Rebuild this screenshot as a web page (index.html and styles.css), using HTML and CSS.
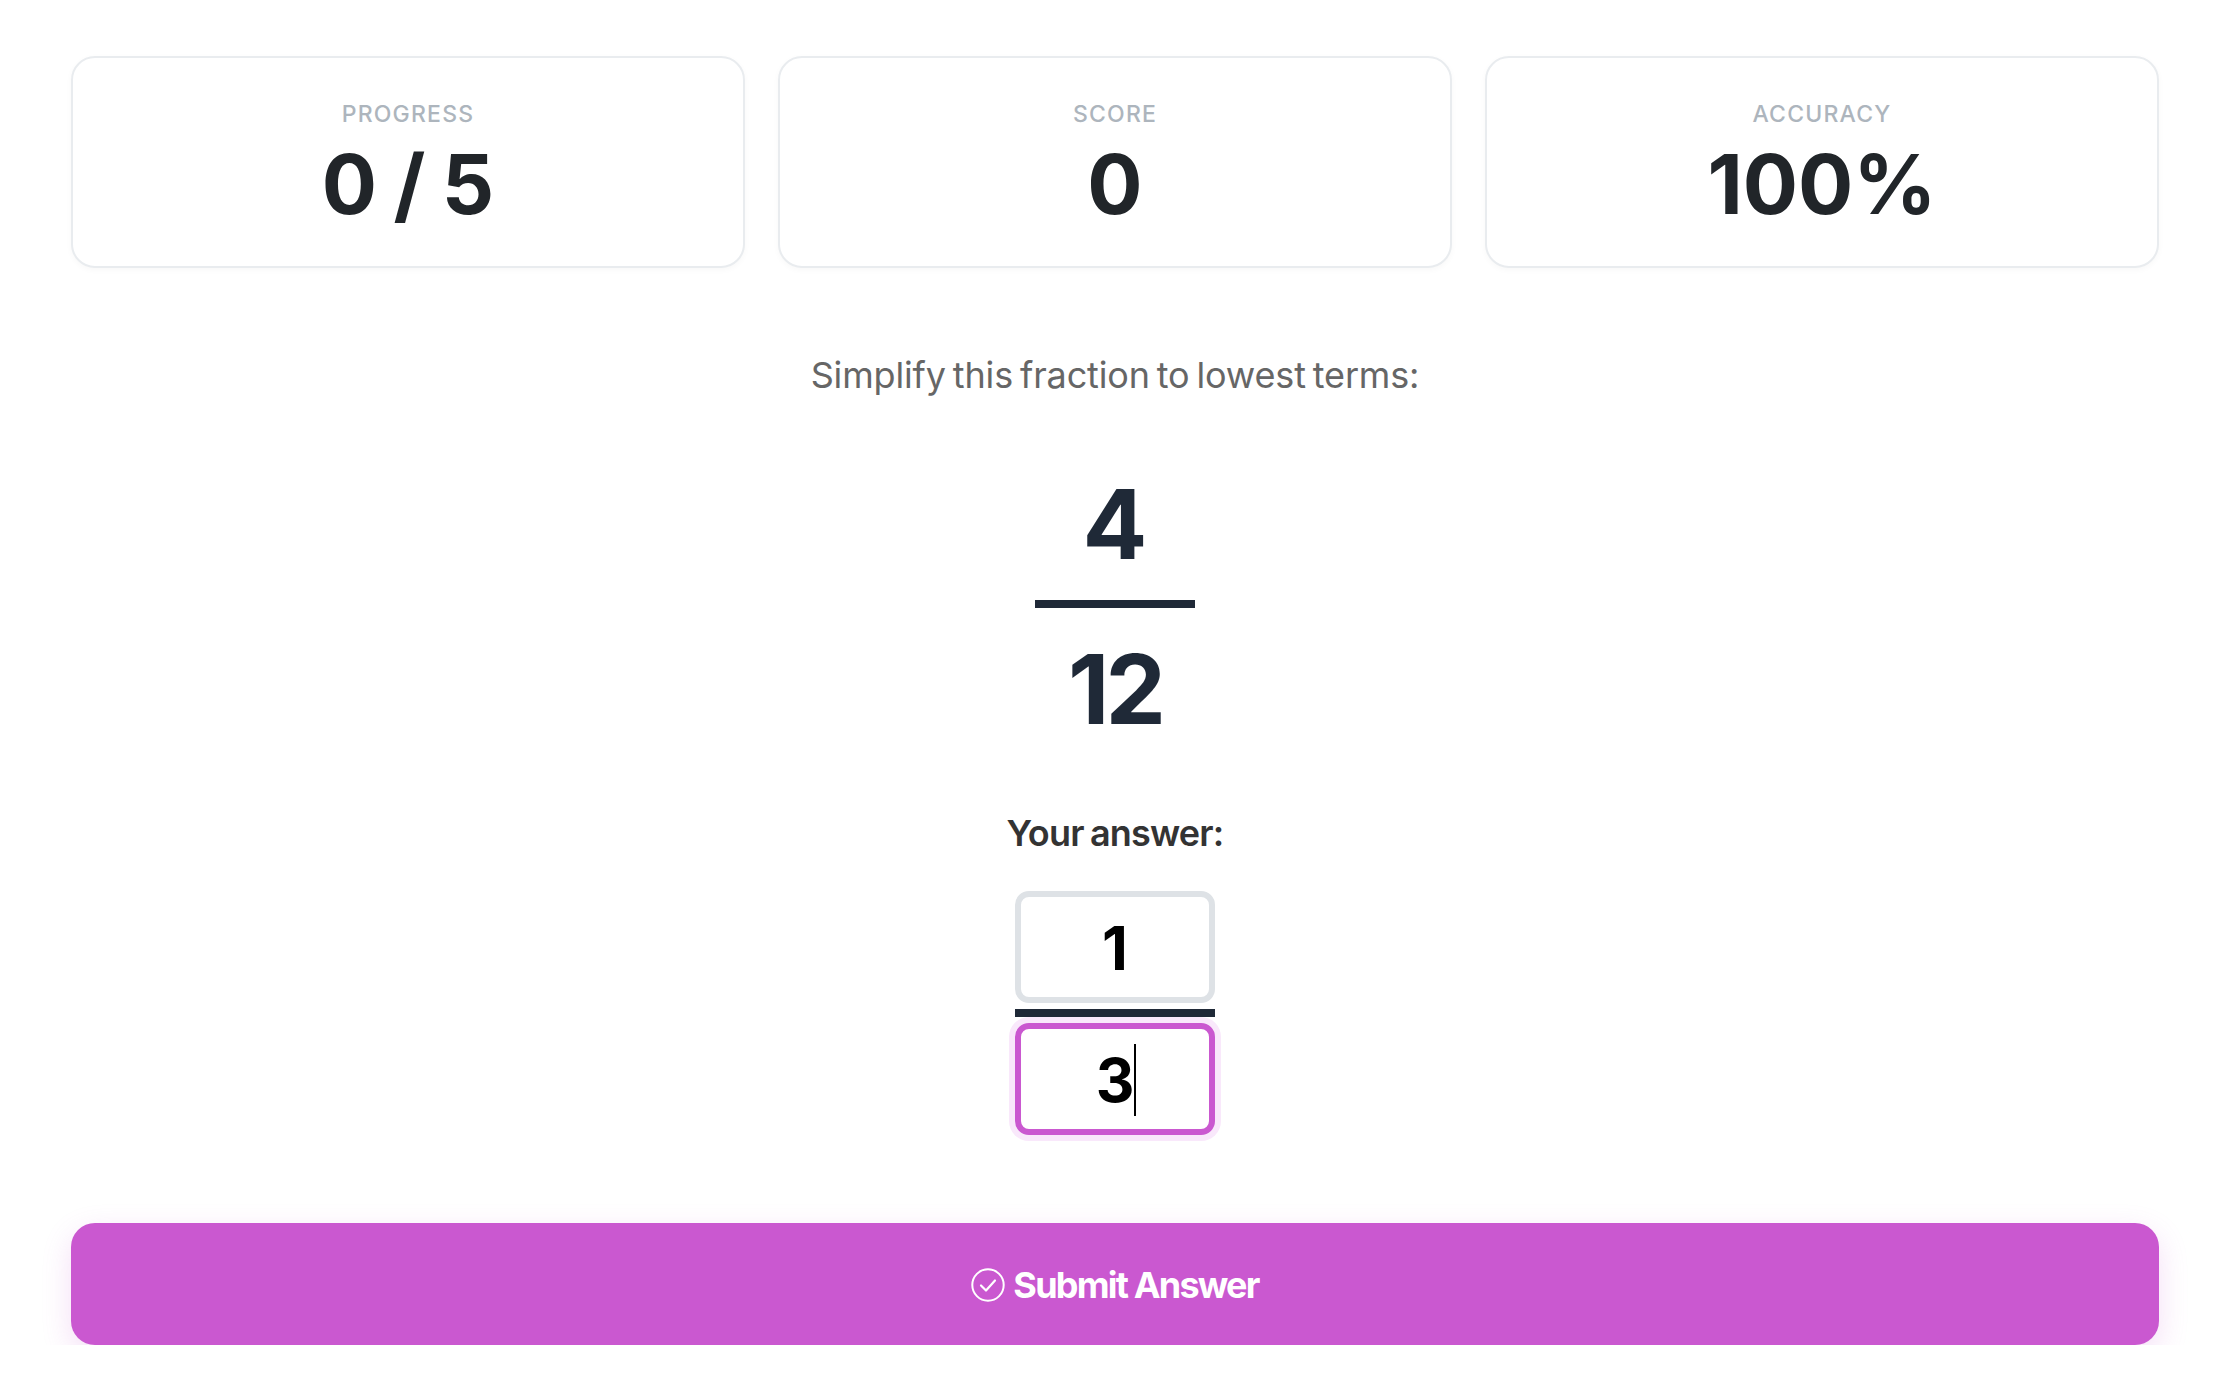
FILE: index.html
```html
<!DOCTYPE html>
<html lang="en">

<head>
    <meta charset="UTF-8">
    <meta name="viewport" content="width=device-width, initial-scale=1.0">
    <title>Simplify Fractions</title>
    <link rel="stylesheet" href="styles.css">
</head>

<body>
    <div class="gameView">
        <div class="statsRow">
            <div class="statCard">
                <div class="statLabel">PROGRESS</div>
                <div class="statValue">0 / 5</div>
            </div>
            <div class="statCard">
                <div class="statLabel">SCORE</div>
                <div class="statValue">0</div>
            </div>
            <div class="statCard">
                <div class="statLabel">ACCURACY</div>
                <div class="statValue">100%</div>
            </div>
        </div>

        <p class="prompt">Simplify this fraction to lowest terms:</p>

        <div class="fraction">
            <div class="fractionNum">4</div>
            <div class="fractionBar"></div>
            <div class="fractionNum fractionDen">12</div>
        </div>

        <div class="answerLabel">Your answer:</div>

        <div class="answerInputs">
            <div class="answerBox">1</div>
            <div class="answerBar"></div>
            <div class="answerBox answerBoxFocus">3<span class="caret"></span></div>
        </div>

        <button class="submitButton">
            <svg class="submitIcon" viewBox="0 0 34 34" fill="none" stroke="#fff">
                <circle cx="17" cy="17" r="15.7" stroke-width="2"></circle>
                <path d="M10 17.5l5 5 9-10" stroke-width="2.2" stroke-linecap="round" stroke-linejoin="round"></path>
            </svg>
            Submit Answer
        </button>
    </div>
</body>

</html>
```

FILE: styles.css
```css
* {
    box-sizing: border-box;
}

body {
    margin: 0;
    background: #fff;
    font-family: Inter, "Noto Sans", sans-serif;
}

.gameView {
    width: 2088px;
    margin-left: 71px;
    padding-top: 56px;
    display: flex;
    flex-direction: column;
    align-items: center;
}

.statsRow {
    width: 100%;
    display: grid;
    grid-template-columns: repeat(3, 1fr);
    gap: 33px;
}

.statCard {
    height: 212px;
    padding-top: 42px;
    border: 2px solid #e9ecef;
    border-radius: 24px;
    background: #fff;
    text-align: center;
    box-shadow: 0 2px 6px rgba(0, 0, 0, 0.03);
}

.statLabel {
    font-size: 23px;
    line-height: 28px;
    font-weight: 500;
    color: #adb5bd;
    letter-spacing: 1.2px;
}

.statValue {
    margin-top: 12px;
    font-size: 82px;
    line-height: 90px;
    font-weight: 700;
    color: #212529;
    word-spacing: -3px;
}

.prompt {
    margin: 82px 0 0;
    font-size: 36px;
    line-height: 50px;
    color: #666;
    letter-spacing: -0.15px;
    word-spacing: -3px;
}

.fraction {
    margin-top: 66px;
    width: 160px;
    display: flex;
    flex-direction: column;
    align-items: center;
}

.fractionNum {
    font-size: 96px;
    line-height: 116px;
    font-weight: 700;
    color: #1f2937;
}

.fractionDen {
    letter-spacing: -4px;
}

.fractionBar {
    width: 100%;
    height: 8px;
    margin: 18px 0 23px;
    background: #1f2937;
}

.answerLabel {
    margin-top: 61px;
    margin-bottom: 1px;
    font-size: 36px;
    line-height: 50px;
    font-weight: 600;
    color: #333;
    letter-spacing: -0.8px;
    word-spacing: -2px;
}

.answerInputs {
    margin-top: 32px;
    width: 200px;
    display: flex;
    flex-direction: column;
}

.answerBox {
    height: 112px;
    padding-top: 2px;
    border: 6px solid #dee2e6;
    border-radius: 14px;
    background: #fff;
    display: flex;
    align-items: center;
    justify-content: center;
    font-size: 60px;
    font-weight: 700;
    color: #000;
}

.answerBar {
    height: 8px;
    margin: 6px 0;
    background: #1f2937;
}

.answerBoxFocus {
    border-color: #ca58d0;
    box-shadow: 0 0 0 6px #f9e8fb;
}

.caret {
    width: 2px;
    height: 72px;
    margin-right: -2px;
    background: #000;
}

.submitButton {
    width: 100%;
    height: 122px;
    margin-top: 88px;
    padding-top: 2px;
    border: none;
    border-radius: 24px;
    background: #ca58d0;
    color: #fff;
    font-family: inherit;
    font-size: 36px;
    font-weight: 700;
    letter-spacing: -1.8px;
    display: flex;
    align-items: center;
    justify-content: center;
    gap: 8px;
    box-shadow: 0 10px 30px rgba(202, 88, 208, 0.2);
}

.submitIcon {
    width: 34px;
    height: 34px;
}
```
